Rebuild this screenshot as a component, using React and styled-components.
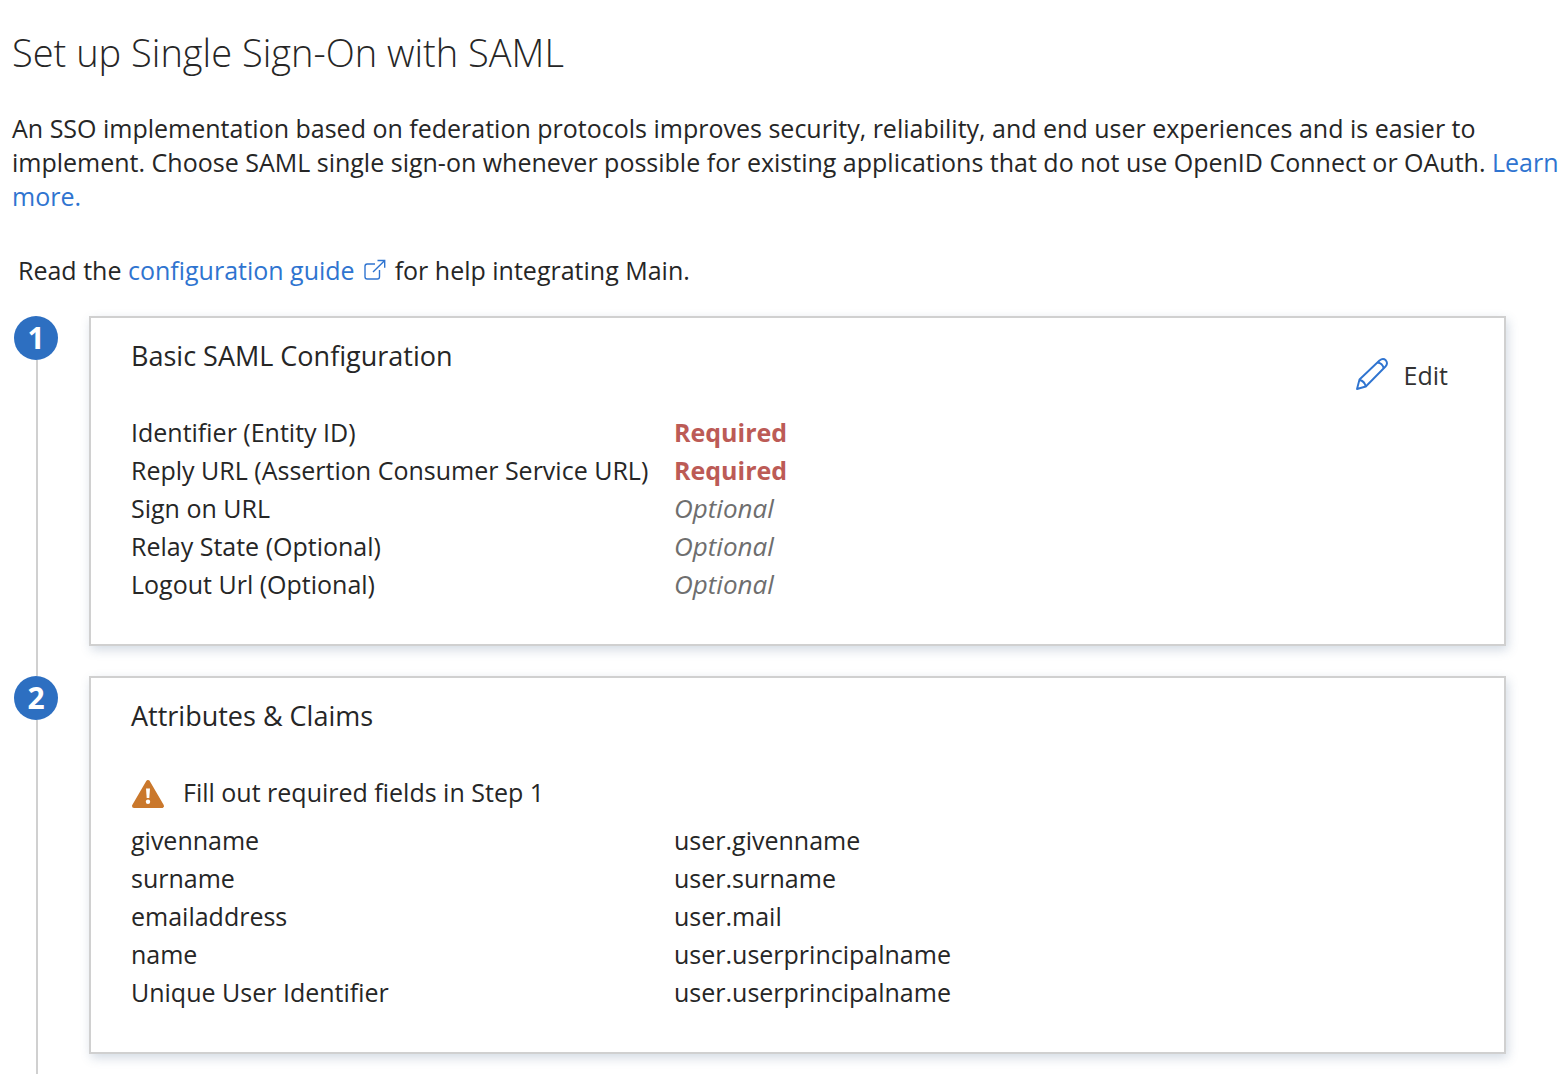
import React from 'react';
import styled, { createGlobalStyle } from 'styled-components';

const constants = {
  colorText: '#262626',
  colorLink: '#2f74d0',
  colorStep: '#2d6fc1',
  colorBorder: '#d0d0d0',
  colorRequired: '#bc5b56',
  colorMuted: '#6e6e6e',
  colorWarning: '#ca782c',
  fontSizeBody: '25px',
  fontSizeOptional: '26px',
  fontSizeHeading: '27px',
};

const GlobalStyle = createGlobalStyle`
  * {
    box-sizing: border-box;
  }

  body {
    margin: 0;
    background: #fff;
    color: ${constants.colorText};
    font-family: "Open Sans", "Noto Sans", sans-serif;
    font-size: ${constants.fontSizeBody};
    line-height: 34px;
  }
`;

const Page = styled.main`
  padding: 24px 0 0 12px;
`;

const Title = styled.h1`
  margin: 0 0 31px;
  font-size: 38px;
  font-weight: 300;
  line-height: 56px;
`;

const Description = styled.p`
  margin: 0 0 40px;
`;

const Guide = styled.p`
  margin: 0 0 29px;
  padding-left: 6px;

  & svg {
    width: 22px;
    height: 22px;
    margin: 0 9px;
    vertical-align: -1px;
  }
`;

const Link = styled.a`
  color: ${constants.colorLink};
  text-decoration: none;

  &:hover {
    text-decoration: underline;
  }
`;

const Steps = styled.ol`
  margin: 0;
  padding: 0 56px 0 2px;
  list-style: none;
`;

const StepItem = styled.li`
  display: flex;
  align-items: stretch;
  gap: 31px;
`;

const Rail = styled.div`
  display: flex;
  flex: none;
  flex-direction: column;
  align-items: center;
  width: 44px;

  &::after {
    content: '';
    flex: 1;
    width: 2px;
    margin-left: 2px;
    background: ${constants.colorBorder};
  }
`;

const StepNumber = styled.span`
  width: 44px;
  height: 44px;
  border-radius: 50%;
  background: ${constants.colorStep};
  color: #fff;
  font-size: 30px;
  font-weight: 700;
  line-height: 44px;
  text-align: center;
`;

const Card = styled.section`
  flex: 1;
  min-width: 0;
  margin-bottom: ${props => (props.$last ? '20px' : '30px')};
  padding: 20px 56px 41px 40px;
  border: 2px solid ${constants.colorBorder};
  background: #fff;
  box-shadow: 2px 4px 10px rgba(60, 90, 130, 0.22);
`;

const CardHeader = styled.header`
  display: flex;
  justify-content: space-between;
  align-items: flex-start;
  min-height: 75px;
`;

const CardTitle = styled.h2`
  margin: 0;
  font-size: ${constants.fontSizeHeading};
  font-weight: 400;
  line-height: 36px;
`;

const EditButton = styled.button`
  display: flex;
  align-items: center;
  gap: 16px;
  height: 36px;
  margin-top: 19px;
  padding: 0;
  border: 0;
  background: none;
  color: #323232;
  font: inherit;
  cursor: pointer;

  & svg {
    width: 32px;
    height: 32px;
    margin-bottom: 2px;
  }
`;

const Warning = styled.div`
  display: flex;
  align-items: center;
  gap: 18px;
  margin-bottom: 10px;
  line-height: 38px;

  & svg {
    width: 34px;
    height: 30px;
    margin-top: 4px;
  }
`;

const FieldTable = styled.table`
  width: 100%;
  border-collapse: collapse;
  table-layout: fixed;
  line-height: 38px;

  & th,
  & td {
    height: 38px;
    padding: 0;
    font-weight: 400;
    text-align: left;
  }

  & th {
    width: 543px;
  }
`;

const Required = styled.strong`
  color: ${constants.colorRequired};
  font-weight: 700;
`;

const Optional = styled.em`
  display: block;
  color: ${constants.colorMuted};
  font-size: ${constants.fontSizeOptional};
`;

const IconExternal = () => (
  <svg viewBox="0 0 22 22" fill="none" stroke={constants.colorLink} strokeWidth="1.4" aria-hidden="true">
    <path d="M11 5H3.200Q1 5 1 7.200V17.800Q1 20 3.200 20H13.300Q15.500 20 15.500 17.800V11" />
    <path d="M9 13L20.500 1.700M13.500 1.500H20.700V8.700" />
  </svg>
);

const IconPencil = () => (
  <svg viewBox="0 0 32 32" fill="none" stroke={constants.colorLink} strokeWidth="1.9" strokeLinejoin="round" aria-hidden="true">
    <path d="M1 31L3.500 21.500L23.500 2.500Q27 -0.200 29.800 2.300Q32.300 5.300 29.500 8.500L9.800 28.500Z" />
    <path d="M21.500 4.500Q26.500 5.300 27.700 10.200M3.500 22Q8.500 23 9.800 28.500" />
  </svg>
);

const IconWarning = () => (
  <svg viewBox="0 0 34 30" aria-hidden="true">
    <path d="M17 3L31 27H3Z" fill={constants.colorWarning} stroke={constants.colorWarning} strokeWidth="4" strokeLinejoin="round" />
    <path d="M15 9.500H19L18.300 19H15.700Z" fill="#fff" />
    <circle cx="17" cy="22.700" r="2.200" fill="#fff" />
  </svg>
);

const samlFields = [
  { name: 'Identifier (Entity ID)', value: <Required>Required</Required> },
  { name: 'Reply URL (Assertion Consumer Service URL)', value: <Required>Required</Required> },
  { name: 'Sign on URL', value: <Optional>Optional</Optional> },
  { name: 'Relay State (Optional)', value: <Optional>Optional</Optional> },
  { name: 'Logout Url (Optional)', value: <Optional>Optional</Optional> },
];

const claimFields = [
  { name: 'givenname', value: 'user.givenname' },
  { name: 'surname', value: 'user.surname' },
  { name: 'emailaddress', value: 'user.mail' },
  { name: 'name', value: 'user.userprincipalname' },
  { name: 'Unique User Identifier', value: 'user.userprincipalname' },
];

const Fields = ({ fields }) => (
  <FieldTable>
    <tbody>
      {fields.map(field => (
        <tr key={field.name}>
          <th scope="row">{field.name}</th>
          <td>{field.value}</td>
        </tr>
      ))}
    </tbody>
  </FieldTable>
);

const Step = ({ number, title, action, last, children }) => (
  <StepItem>
    <Rail>
      <StepNumber>{number}</StepNumber>
    </Rail>
    <Card $last={last}>
      <CardHeader>
        <CardTitle>{title}</CardTitle>
        {action}
      </CardHeader>
      {children}
    </Card>
  </StepItem>
);

export default function App() {
  return (
    <Page>
      <GlobalStyle />
      <Title>Set up Single Sign-On with SAML</Title>
      <Description>
        An SSO implementation based on federation protocols improves security, reliability, and end user
        experiences and is easier to implement. Choose SAML single sign-on whenever possible for existing
        applications that do not use OpenID Connect or OAuth. <Link href="#learn-more">Learn more.</Link>
      </Description>
      <Guide>
        Read the <Link href="#guide">configuration guide<IconExternal /></Link>for help integrating Main.
      </Guide>
      <Steps>
        <Step
          number={1}
          title="Basic SAML Configuration"
          action={<EditButton type="button"><IconPencil />Edit</EditButton>}
        >
          <Fields fields={samlFields} />
        </Step>
        <Step number={2} title="Attributes & Claims" last>
          <Warning>
            <IconWarning />
            Fill out required fields in Step 1
          </Warning>
          <Fields fields={claimFields} />
        </Step>
      </Steps>
    </Page>
  );
}
